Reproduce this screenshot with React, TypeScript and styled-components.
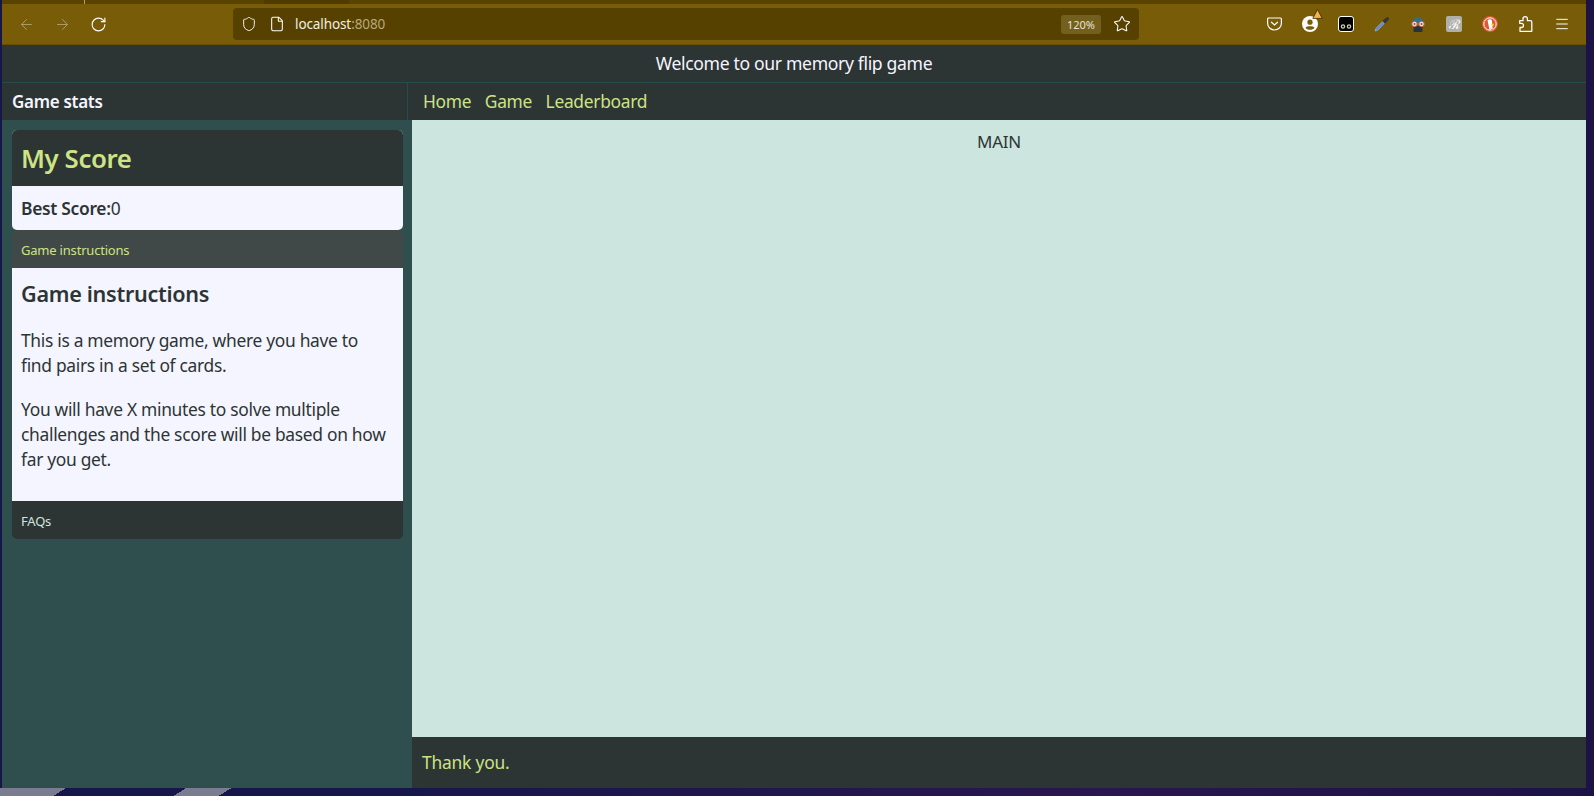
import React from 'react';
import styled, { createGlobalStyle } from 'styled-components';
import { ArrowLeft, ArrowRight, RotateCw, Shield, File, Star, Menu } from 'lucide-react';

const dark = '#2c3434';
const teal = '#2f4f4f';
const lime = '#cde385';
const paper = '#f5f5ff';
const mint = '#cde5df';

const GlobalStyle = createGlobalStyle`
  html, body {
    margin: 0;
    height: 100%;
    overflow: hidden;
  }
  body {
    background:
      linear-gradient(148deg, #7b7b92 35px, transparent 35px) 0 788px / 66px 8px no-repeat,
      linear-gradient(148deg, transparent 7px, #7b7b92 7px 31px, transparent 31px) 173px 788px / 59px 8px no-repeat,
      linear-gradient(90deg, #15164a 0, #17164c 400px, #2a1650 1100px, #1c1246 1594px);
    font-family: "Noto Sans", "Open Sans", sans-serif;
  }
`;

const Window = styled.div`
  width: 1584px;
  height: 788px;
  margin-left: 2px;
  display: flex;
  flex-direction: column;
`;

const TabStrip = styled.div`
  height: 4px;
  flex: none;
  background:
    linear-gradient(#a89f85, #a89f85) 82px 0 / 1px 4px no-repeat,
    linear-gradient(#4f3b00, #4f3b00) 262px 0 / 85px 4px no-repeat,
    #5a4300;
`;

const Toolbar = styled.div`
  height: 41px;
  flex: none;
  background: #785c07;
  border-bottom: 1px solid #684f04;
  box-sizing: border-box;
  display: flex;
  align-items: center;
  padding-left: 16px;
`;

const NavIcons = styled.div`
  display: flex;
  align-items: center;
  gap: 19px;
  width: 215px;
  color: #fbfbfe;
`;

const Dim = styled.span`
  display: flex;
  opacity: 0.4;
`;

const UrlBar = styled.div`
  width: 906px;
  height: 32px;
  background: #574100;
  border-radius: 4px;
  display: flex;
  align-items: center;
  padding: 0 8px;
  box-sizing: border-box;
  color: #fbfbfe;
  gap: 12px;
`;

const Host = styled.div`
  flex: 1;
  margin-left: -2px;
  font-size: 13.5px;
  color: #f3eee0;
  letter-spacing: -0.1px;
`;

const Port = styled.span`
  color: #b8a878;
`;

const ZoomChip = styled.div`
  width: 40px;
  height: 19px;
  border-radius: 3px;
  background: #73601f;
  color: #e8e2cf;
  font-size: 11px;
  display: flex;
  align-items: center;
  justify-content: center;
`;

const Extensions = styled.div`
  display: flex;
  align-items: center;
  margin-left: 127px;
  gap: 20px;
  color: #fbfbfe;
`;

const Slot = styled.span`
  width: 16px;
  height: 16px;
  display: flex;
  align-items: center;
  justify-content: center;
  position: relative;
`;

const Header = styled.div`
  height: 36px;
  padding-bottom: 1px;
  flex: none;
  background: ${dark};
  border-bottom: 1px solid #264c4c;
  display: flex;
  align-items: center;
  justify-content: center;
  color: ${paper};
  font-size: 17.6px;
  letter-spacing: -0.35px;
`;

const Layout = styled.div`
  flex: 1;
  display: grid;
  grid-template-columns: 410px 1fr;
  min-height: 0;
`;

const Sidebar = styled.aside`
  background: ${teal};
  display: flex;
  flex-direction: column;
`;

const SideTitle = styled.div`
  width: 395px;
  height: 36px;
  padding: 0 0 1px 10px;
  background: ${dark};
  border-right: 1px solid #264c4c;
  display: flex;
  align-items: center;
  color: ${paper};
  font-size: 17px;
  font-weight: 600;
  letter-spacing: -0.3px;
`;

const Stack = styled.div`
  margin: 10px 9px 0 10px;
  display: flex;
  flex-direction: column;
`;

const ScoreCard = styled.section`
  border-radius: 5px;
  overflow: hidden;
  background: ${paper};
`;

const ScoreHead = styled.h2`
  margin: 0;
  height: 55px;
  padding: 0 0 1px 9px;
  background: ${dark};
  color: ${lime};
  font-size: 25.8px;
  font-weight: 600;
  letter-spacing: -0.4px;
  display: flex;
  align-items: center;
`;

const ScoreBody = styled.div`
  height: 44px;
  display: flex;
  align-items: center;
  padding-left: 9px;
  color: ${dark};
  font-size: 17.4px;
  letter-spacing: -0.3px;
  b {
    font-weight: 600;
  }
`;

const Accordion = styled.section`
  border-radius: 5px;
  overflow: hidden;
`;

const AccordionHead = styled.div<{ $open?: boolean }>`
  height: 36px;
  padding: 2px 0 0 9px;
  background: ${(p) => (p.$open ? '#404848' : dark)};
  color: ${(p) => (p.$open ? lime : '#cde5df')};
  font-size: 13px;
  letter-spacing: -0.2px;
  display: flex;
  align-items: center;
`;

const AccordionBody = styled.div`
  height: 233px;
  box-sizing: border-box;
  background: ${paper};
  color: ${dark};
  padding: 11px 12px 0 9px;
  h3 {
    margin: 0 0 19px;
    font-size: 21.6px;
    font-weight: 600;
    line-height: 30px;
    letter-spacing: -0.3px;
  }
  p {
    margin: 0 0 19px;
    font-size: 17.4px;
    line-height: 25px;
    letter-spacing: -0.3px;
  }
`;

const Content = styled.div`
  display: flex;
  flex-direction: column;
  background: ${mint};
`;

const TopNav = styled.nav`
  height: 35px;
  padding: 0 0 2px 15px;
  flex: none;
  background: ${dark};
  margin-left: -4px;
  display: flex;
  align-items: center;
  gap: 13.5px;
  color: ${lime};
  font-size: 17.4px;
  letter-spacing: -0.3px;
`;

const Main = styled.main`
  flex: 1;
  color: ${dark};
  font-size: 17px;
  letter-spacing: -0.3px;
  text-align: center;
  padding-top: 10px;
`;

const Footer = styled.footer`
  height: 49px;
  padding: 0 0 2px 10px;
  flex: none;
  background: ${dark};
  color: ${lime};
  font-size: 17.4px;
  letter-spacing: -0.2px;
  display: flex;
  align-items: center;
`;

const Badge = styled.svg`
  position: absolute;
  top: -7px;
  right: -5px;
`;

const GreyExt = styled.span`
  width: 16px;
  height: 16px;
  border-radius: 2px;
  background: #b0afa9;
  color: #fff;
  font: 13px "Liberation Serif", serif;
  display: flex;
  align-items: center;
  justify-content: center;
`;

const PocketIcon = () => (
  <svg width="15" height="14" viewBox="0 0 15 14" fill="none" stroke="currentColor" strokeWidth="1.2">
    <path d="M1.600 1h11.800a1 1 0 0 1 1 1v4.300a6.900 6.700 0 0 1-13.800 0V2a1 1 0 0 1 1-1z" />
    <path d="M4.500 5.200l3 2.800 3-2.800" strokeLinecap="round" />
  </svg>
);

const AccountIcon = () => (
  <svg width="16" height="16" viewBox="0 0 16 16">
    <circle cx="8" cy="8" r="8" fill="#fbfbfe" />
    <circle cx="8" cy="6.200" r="2.600" fill="#785c07" />
    <path d="M3.500 11.700c1.500-1.800 7.500-1.800 9 0-1 1.300-2.600 2.100-4.500 2.100s-3.500-.8-4.500-2.100z" fill="#785c07" />
  </svg>
);

const GogglesBox = () => (
  <svg width="16" height="16" viewBox="0 0 16 16">
    <rect x="0.500" y="0.500" width="15" height="15" rx="2.500" fill="#000" stroke="#fff" />
    <circle cx="5" cy="10.500" r="2.200" fill="#d8d0b0" />
    <circle cx="11" cy="10.500" r="2.200" fill="#d8d0b0" />
    <circle cx="5" cy="10.500" r="1" fill="#000" />
    <circle cx="11" cy="10.500" r="1" fill="#000" />
  </svg>
);

const Dropper = () => (
  <svg width="16" height="16" viewBox="0 0 16 16">
    <path d="M1 15l2.800-.7 6.400-6.800-1.800-1.700-6.600 6.600z" fill="#5f8ae0" stroke="#c9d6f2" strokeWidth=".4" />
    <path d="M8.600 4.800l2.600 2.600 3.400-3.700a1.400 1.400 0 0 0-2.200-2.200z" fill="#34363a" />
  </svg>
);

const SpyIcon = () => (
  <svg width="16" height="16" viewBox="0 0 16 16">
    <path d="M2.500 7a5.500 6 0 0 1 11 0z" fill="#2f7088" />
    <rect x="3.500" y="10" width="9" height="6" rx="1" fill="#26333a" />
    <circle cx="4.500" cy="8" r="2.800" fill="#e6dcd6" stroke="#c2553f" />
    <circle cx="11.500" cy="8" r="2.800" fill="#e6dcd6" stroke="#c2553f" />
    <circle cx="4.500" cy="8" r="1" fill="#8a5a50" />
    <circle cx="11.500" cy="8" r="1" fill="#8a5a50" />
  </svg>
);

const DuckIcon = () => (
  <svg width="16" height="16" viewBox="0 0 16 16">
    <circle cx="8" cy="8" r="8" fill="#de5833" />
    <circle cx="8" cy="8" r="6.200" fill="#de5833" stroke="#fff" />
    <path d="M5.500 4.200c2-1.500 4-1 4.500.5l.7 9h-3.200z" fill="#fff" />
    <path d="M9 8.500l3.200-1-1 3z" fill="#fdd20a" />
    <path d="M8 12.500l3 .5-1 1.200z" fill="#65bc46" />
  </svg>
);

const PuzzleIcon = () => (
  <svg width="16" height="18" viewBox="0 0 16 18" fill="none" stroke="currentColor" strokeWidth="1.300" strokeLinejoin="round">
    <path d="M1.700 5.700h3.300V3.800a2.200 2.200 0 0 1 4.400 0v1.900h3.200a1.500 1.500 0 0 1 1.200 1.300v9.300H2v-3.800h1.400a2.100 2.100 0 0 0 0-4.200H1.700z" />
  </svg>
);

const App: React.FC = () => (
  <>
    <GlobalStyle />
    <Window>
      <TabStrip />
      <Toolbar>
        <NavIcons>
          <Dim><ArrowLeft size={17} strokeWidth={1.4} /></Dim>
          <Dim><ArrowRight size={17} strokeWidth={1.4} /></Dim>
          <RotateCw size={17} strokeWidth={1.6} />
        </NavIcons>
        <UrlBar>
          <Shield size={16} strokeWidth={1.4} />
          <File size={16} strokeWidth={1.6} />
          <Host>localhost<Port>:8080</Port></Host>
          <ZoomChip>120%</ZoomChip>
          <Star size={18} strokeWidth={1.4} />
        </UrlBar>
        <Extensions>
          <Slot><PocketIcon /></Slot>
          <Slot>
            <AccountIcon />
            <Badge width="11" height="10" viewBox="0 0 11 10"><path d="M5.500.6l4.700 8.800H.8z" fill="#f5b34e" stroke="#2a2000" strokeWidth=".7" strokeLinejoin="round" /></Badge>
          </Slot>
          <Slot><GogglesBox /></Slot>
          <Slot><Dropper /></Slot>
          <Slot><SpyIcon /></Slot>
          <GreyExt>ℛ</GreyExt>
          <Slot><DuckIcon /></Slot>
          <Slot><PuzzleIcon /></Slot>
          <Slot><Menu size={18} strokeWidth={1.5} /></Slot>
        </Extensions>
      </Toolbar>
      <Header>Welcome to our memory flip game</Header>
      <Layout>
        <Sidebar>
          <SideTitle>Game stats</SideTitle>
          <Stack>
            <ScoreCard>
              <ScoreHead>My Score</ScoreHead>
              <ScoreBody><b>Best Score:</b>0</ScoreBody>
            </ScoreCard>
            <Accordion>
              <AccordionHead $open>Game instructions</AccordionHead>
              <AccordionBody>
                <h3>Game instructions</h3>
                <p>This is a memory game, where you have to find pairs in a set of cards.</p>
                <p>You will have X minutes to solve multiple challenges and the score will be based on how far you get.</p>
              </AccordionBody>
              <AccordionHead>FAQs</AccordionHead>
            </Accordion>
          </Stack>
        </Sidebar>
        <Content>
          <TopNav>
            <span>Home</span>
            <span>Game</span>
            <span>Leaderboard</span>
          </TopNav>
          <Main>MAIN</Main>
          <Footer>Thank you.</Footer>
        </Content>
      </Layout>
    </Window>
  </>
);

export default App;
